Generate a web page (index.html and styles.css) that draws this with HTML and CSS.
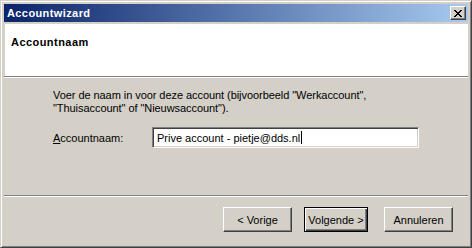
FILE: index.html
```html
<!DOCTYPE html>
<html lang="nl">
<head>
    <meta charset="UTF-8">
    <title>Accountwizard</title>
    <link rel="stylesheet" href="styles.css">
</head>
<body>
    <div class="window">
        <div class="titlebar">
            <span class="title">Accountwizard</span>
            <span class="close-btn">
                <svg width="8" height="7" viewBox="0 0 8 7">
                    <path d="M0 0h2v1h1v1h2v-1h1v-1h2v1h-1v1h-1v1h-1v1h1v1h1v1h1v1h-2v-1h-1v-1h-2v1h-1v1h-2v-1h1v-1h1v-1h1v-1h-1v-1h-1v-1h-1z" fill="#000"/>
                </svg>
            </span>
        </div>

        <div class="client">
            <div class="header">
                <h1>Accountnaam</h1>
            </div>
            <div class="sep"></div>

            <div class="content">
                <p class="intro">Voer de naam in voor deze account (bijvoorbeeld "Werkaccount",<br>"Thuisaccount" of "Nieuwsaccount").</p>
                <div class="field">
                    <label for="accName"><u>A</u>ccountnaam:</label>
                    <div class="textbox" id="accName">Prive account - pietje@dds.nl<span class="caret"></span></div>
                </div>
            </div>
            <div class="sep"></div>

            <div class="footer">
                <button class="btn btn-back">&lt; Vorige</button>
                <button class="btn btn-next">Volgende &gt;</button>
                <button class="btn btn-cancel">Annuleren</button>
            </div>
        </div>
    </div>
</body>
</html>
```

FILE: styles.css
```css
body {
    margin: 0;
    background-color: #d4d0c8;
    font-family: "Liberation Sans", Arial, sans-serif;
    font-size: 11px;
    color: #000000;
}

.window {
    width: 472px;
    height: 248px;
    box-sizing: border-box;
    background-color: #d4d0c8;
    border: 1px solid;
    border-color: #d4d0c8 #404040 #404040 #d4d0c8;
    box-shadow: inset 1px 1px #ffffff, inset -1px -1px #808080;
    padding: 3px;
    display: flex;
    flex-direction: column;
}

.titlebar {
    height: 18px;
    flex-shrink: 0;
    background: linear-gradient(to right, #0a246a, #a6caf0);
    display: flex;
    align-items: center;
    justify-content: space-between;
    padding: 0 2px 0 3px;
}

.title {
    color: #ffffff;
    font-weight: bold;
    font-size: 11px;
    letter-spacing: 0.4px;
}

.close-btn {
    width: 16px;
    height: 14px;
    box-sizing: border-box;
    background-color: #d4d0c8;
    border: 1px solid;
    border-color: #ffffff #404040 #404040 #ffffff;
    box-shadow: inset -1px -1px #808080;
    display: flex;
    align-items: center;
    justify-content: center;
    padding-right: 1px;
}

.client {
    flex: 1;
    display: flex;
    flex-direction: column;
    padding-top: 2px;
}

.header {
    height: 52px;
    flex-shrink: 0;
    background-color: #ffffff;
    margin-left: 1px;
    box-sizing: border-box;
    padding: 12px 0 0 6px;
}

.header h1 {
    margin: 0;
    font-size: 11px;
    font-weight: bold;
    line-height: 13px;
    letter-spacing: 0.45px;
}

.sep {
    height: 1px;
    flex-shrink: 0;
    background-color: #808080;
    border-bottom: 1px solid #ffffff;
}

.content {
    height: 117px;
    flex-shrink: 0;
    box-sizing: border-box;
    padding: 11px 0 0 49px;
}

.intro {
    margin: 0;
    line-height: 13px;
    letter-spacing: -0.06px;
}

.field {
    display: flex;
    align-items: center;
    margin-top: 12px;
}

.field label {
    width: 99px;
}

.textbox {
    width: 267px;
    height: 21px;
    box-sizing: border-box;
    background-color: #ffffff;
    border: 1px solid;
    border-color: #808080 #ffffff #ffffff #808080;
    box-shadow: inset 1px 1px #404040, inset -1px -1px #d4d0c8;
    padding: 0 4px;
    display: flex;
    align-items: center;
}

.caret {
    display: inline-block;
    width: 1px;
    height: 13px;
    background-color: #000000;
    margin-left: 1px;
}

.footer {
    display: flex;
    justify-content: flex-end;
    padding: 10px 15px 0 0;
}

.btn {
    height: 25px;
    box-sizing: border-box;
    background-color: #d4d0c8;
    font-family: "Liberation Sans", Arial, sans-serif;
    font-size: 11px;
    color: #000000;
    border: 1px solid;
    border-color: #ffffff #404040 #404040 #ffffff;
    box-shadow: inset -1px -1px #808080;
    padding: 0;
}

.btn-back {
    width: 69px;
}

.btn-next {
    width: 64px;
    margin-left: 12px;
    border-color: #000000;
    box-shadow: inset 1px 1px #ffffff, inset -1px -1px #404040, inset -2px -2px #808080;
}

.btn-cancel {
    width: 69px;
    margin-left: 16px;
}
```
